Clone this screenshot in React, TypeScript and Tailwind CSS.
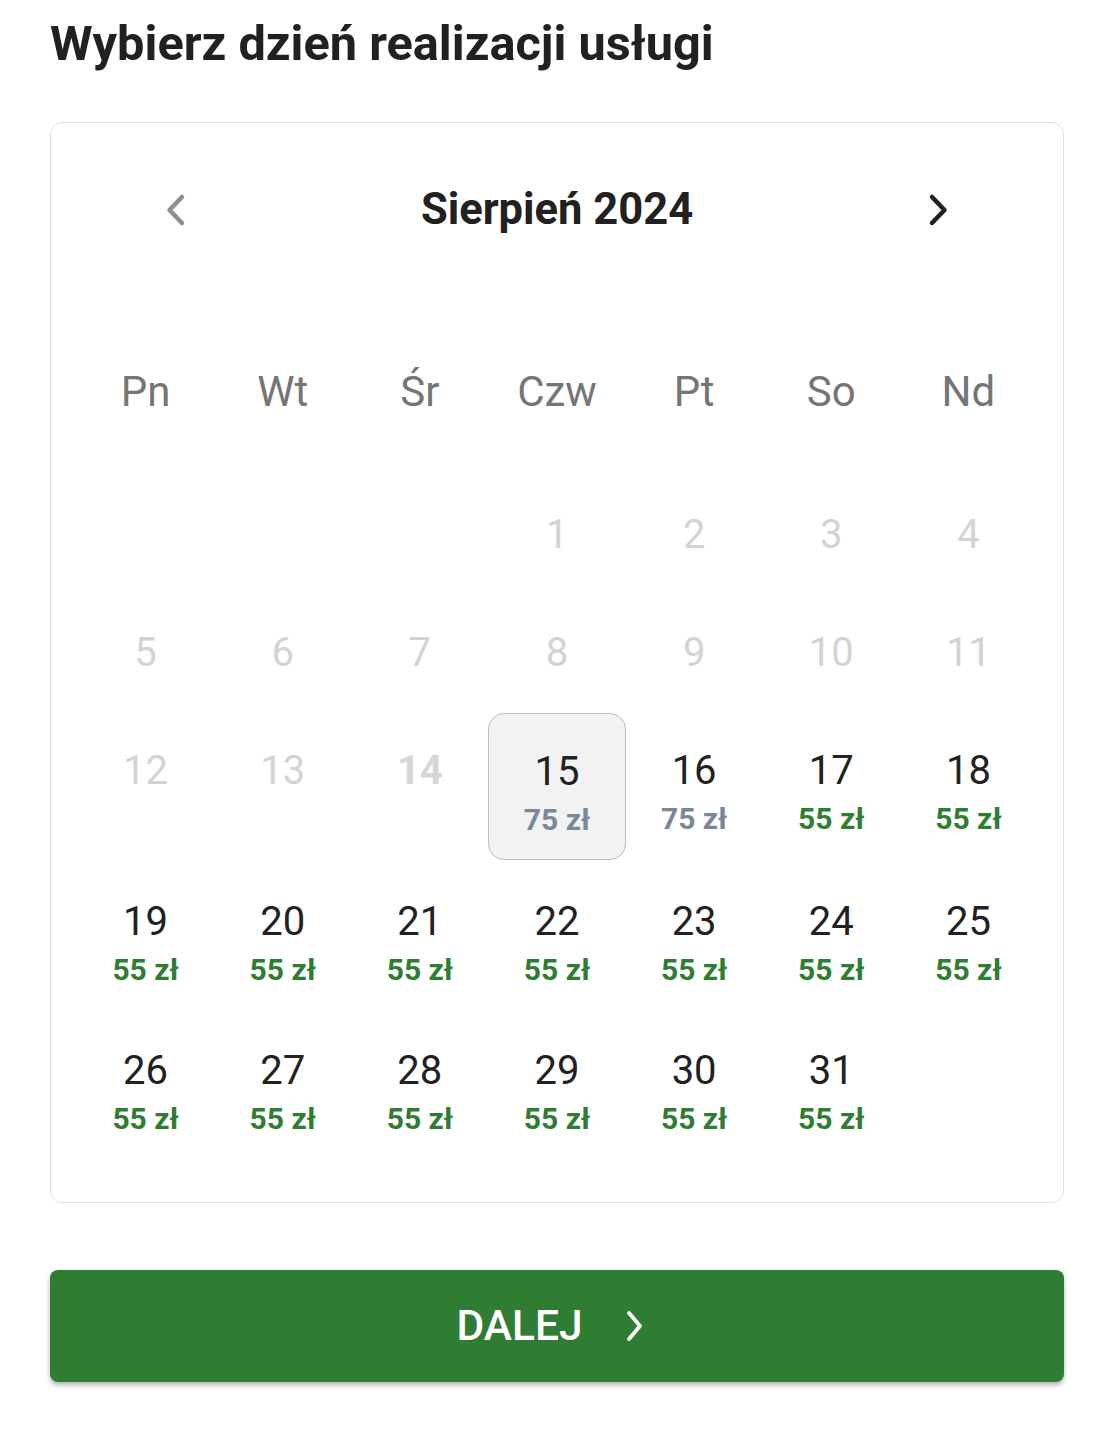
import React from "react";

type Cell = { d: number | null; price?: string; kind?: "disabled" | "today" | "selected" | "gray" | "green" };

const rows: Cell[][] = [
  [{ d: null }, { d: null }, { d: null }, { d: 1, kind: "disabled" }, { d: 2, kind: "disabled" }, { d: 3, kind: "disabled" }, { d: 4, kind: "disabled" }],
  [5, 6, 7, 8, 9, 10, 11].map((d) => ({ d, kind: "disabled" as const })),
  [
    { d: 12, kind: "disabled" },
    { d: 13, kind: "disabled" },
    { d: 14, kind: "today" },
    { d: 15, kind: "selected", price: "75 zł" },
    { d: 16, kind: "gray", price: "75 zł" },
    { d: 17, kind: "green", price: "55 zł" },
    { d: 18, kind: "green", price: "55 zł" },
  ],
  [19, 20, 21, 22, 23, 24, 25].map((d) => ({ d, kind: "green" as const, price: "55 zł" })),
  [
    ...[26, 27, 28, 29, 30, 31].map((d) => ({ d, kind: "green" as const, price: "55 zł" })),
    { d: null },
  ],
];

const weekdays = ["Pn", "Wt", "Śr", "Czw", "Pt", "So", "Nd"];

function DayCell({ c }: { c: Cell }) {
  if (c.d === null) return <div />;
  const hasPrice = !!c.price;
  const base = "flex flex-col items-center pt-[34px] " + (hasPrice ? "pb-[15px]" : "pb-[32px]");
  const box = c.kind === "selected" ? " rounded-[16px] border border-[#bdbdbd] bg-[#f2f2f2] pt-[33px] pb-[14px]" : "";
  let numCls = "text-[40px] leading-[48px] text-[#212121]";
  if (c.kind === "disabled") numCls = "text-[40px] leading-[48px] text-[#d3d3d3]";
  if (c.kind === "today") numCls = "text-[40px] leading-[48px] font-bold text-[#d6d6d6]";
  const priceCls =
    c.kind === "green"
      ? "text-[30px] leading-[48px] font-bold text-[#2e7d32]"
      : "text-[30px] leading-[48px] font-bold text-[#7a8699]";
  return (
    <div className={base + box}>
      <span className={numCls}>{c.d}</span>
      {hasPrice && <span className={priceCls}>{c.price}</span>}
    </div>
  );
}

export default function App() {
  return (
    <div className="min-h-screen bg-white px-[50px] pt-[16px] pb-[40px] font-['Roboto',sans-serif]">
      <h1 className="text-[48.7px] font-bold leading-[56px] text-[#212121]">Wybierz dzień realizacji usługi</h1>

      <div className="mt-[50px] rounded-[12px] border border-[#e0e0e0] px-[26px] pt-[63px] pb-[44px]">
        <div className="flex items-center justify-between px-[88px]">
          <svg width="24" height="40" viewBox="0 0 24 40" fill="none">
            <polyline points="17,7 4.5,20 17,33" stroke="#8f8f8f" strokeWidth="4.5" strokeLinecap="round" strokeLinejoin="round" />
          </svg>
          <span className="text-[43.5px] font-bold leading-[48px] text-[#212121]">Sierpień 2024</span>
          <svg width="24" height="40" viewBox="0 0 24 40" fill="none">
            <polyline points="7,7 19.5,20 7,33" stroke="#212121" strokeWidth="4.5" strokeLinecap="round" strokeLinejoin="round" />
          </svg>
        </div>

        <div className="mt-[134px] grid grid-cols-7">
          {weekdays.map((w) => (
            <div key={w} className="text-center text-[42px] leading-[48px] text-[#757575]">
              {w}
            </div>
          ))}
        </div>

        <div className="mt-[61px] grid grid-cols-7 gap-y-[4px]">
          {rows.flat().map((c, i) => (
            <DayCell key={i} c={c} />
          ))}
        </div>
      </div>

      <button className="mt-[67px] flex h-[112px] w-full items-center justify-center gap-[41px] rounded-[8px] bg-[#2e7d32] pr-[12px] text-white shadow-[0_3px_5px_rgba(0,0,0,0.3)]">
        <span className="text-[42.5px] font-medium leading-[48px]">DALEJ</span>
        <svg width="22" height="36" viewBox="0 0 22 36" fill="none">
          <polyline points="5,5 16,18 5,31" stroke="#ffffff" strokeWidth="3.8" strokeLinecap="round" strokeLinejoin="round" />
        </svg>
      </button>
    </div>
  );
}
